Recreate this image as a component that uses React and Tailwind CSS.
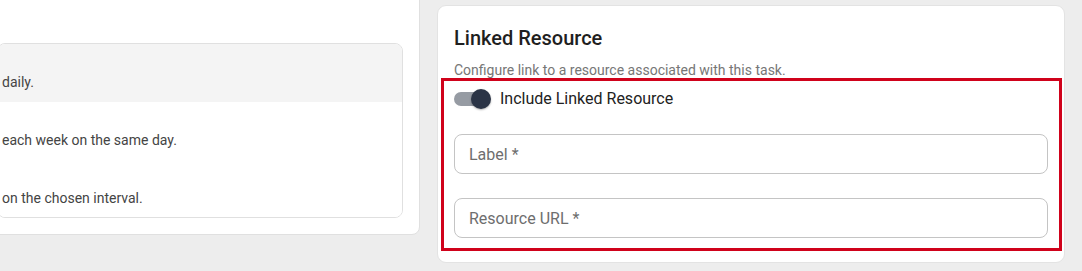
import React, { useState } from 'react';

const options = [
  { id: 'daily', text: 'daily.' },
  { id: 'weekly', text: 'each week on the same day.' },
  { id: 'custom', text: 'on the chosen interval.' },
];

const App = () => {
  const [selected, setSelected] = useState('daily');
  const [linked, setLinked] = useState(true);

  return (
    <div
      className="h-[271px] w-full overflow-hidden bg-[#ededed] flex items-start"
      style={{ fontFamily: 'Roboto, "Liberation Sans", sans-serif' }}
    >
      {/* Recurrence card (cut off on the left) */}
      <div className="-ml-5 -mt-5 w-[440px] shrink-0 bg-white border border-[#e0e0e0] rounded-lg pt-[62px] px-4 pb-4">
        <div className="border border-[#e0e0e0] rounded-lg overflow-hidden">
          {options.map((opt, index) => (
            <div
              key={opt.id}
              onClick={() => setSelected(opt.id)}
              className={`pl-[4px] pt-[28px] text-[14px] leading-5 text-[#444] cursor-pointer ${
                index === options.length - 1 ? 'h-[57px]' : 'h-[58px]'
              } ${selected === opt.id ? 'bg-[#f4f4f4]' : 'bg-white'}`}
            >
              {opt.text}
            </div>
          ))}
        </div>
      </div>

      {/* Linked Resource card */}
      <div className="relative ml-[17px] mt-[5px] w-[628px] shrink-0 bg-white border border-[#e3e3e3] rounded-[9px] px-4 pt-4 pb-6">
        <h2 className="text-[20px] leading-8 font-medium text-[#1f1f1f]">Linked Resource</h2>
        <p className="mt-[6px] text-[14px] leading-5 text-[#767676]">
          Configure link to a resource associated with this task.
        </p>

        <label className="flex items-center h-[38px] cursor-pointer">
          <span className="relative w-[58px] h-[38px] shrink-0 -ml-3 flex items-center justify-center">
            <span
              className={`w-[34px] h-[14px] rounded-full ${linked ? 'bg-[#969ba3]' : 'bg-[#b0b0b0]'}`}
            />
            <span
              className={`absolute top-[9px] w-5 h-5 rounded-full shadow-[0_1px_2px_rgba(0,0,0,0.3)] ${
                linked ? 'left-[29px] bg-[#2b3446]' : 'left-[9px] bg-[#fafafa]'
              }`}
            />
            <input
              type="checkbox"
              checked={linked}
              onChange={() => setLinked(!linked)}
              className="absolute inset-0 opacity-0 cursor-pointer"
            />
          </span>
          <span className="text-[16px] text-[#222]">Include Linked Resource</span>
        </label>

        <input
          type="text"
          placeholder="Label *"
          className="mt-4 block w-full h-10 px-[14px] rounded-lg border border-[#c4c4c4] text-[16px] text-[#222] placeholder:text-[#6e6e6e] outline-none"
        />
        <input
          type="text"
          placeholder="Resource URL *"
          className="mt-6 block w-full h-10 px-[14px] rounded-lg border border-[#c4c4c4] text-[16px] text-[#222] placeholder:text-[#6e6e6e] outline-none"
        />

        {/* highlight box */}
        <div className="pointer-events-none absolute left-[3px] top-[72px] w-[621px] h-[173px] border-[3px] border-[#d0021b]" />
      </div>
    </div>
  );
};

export default App;
